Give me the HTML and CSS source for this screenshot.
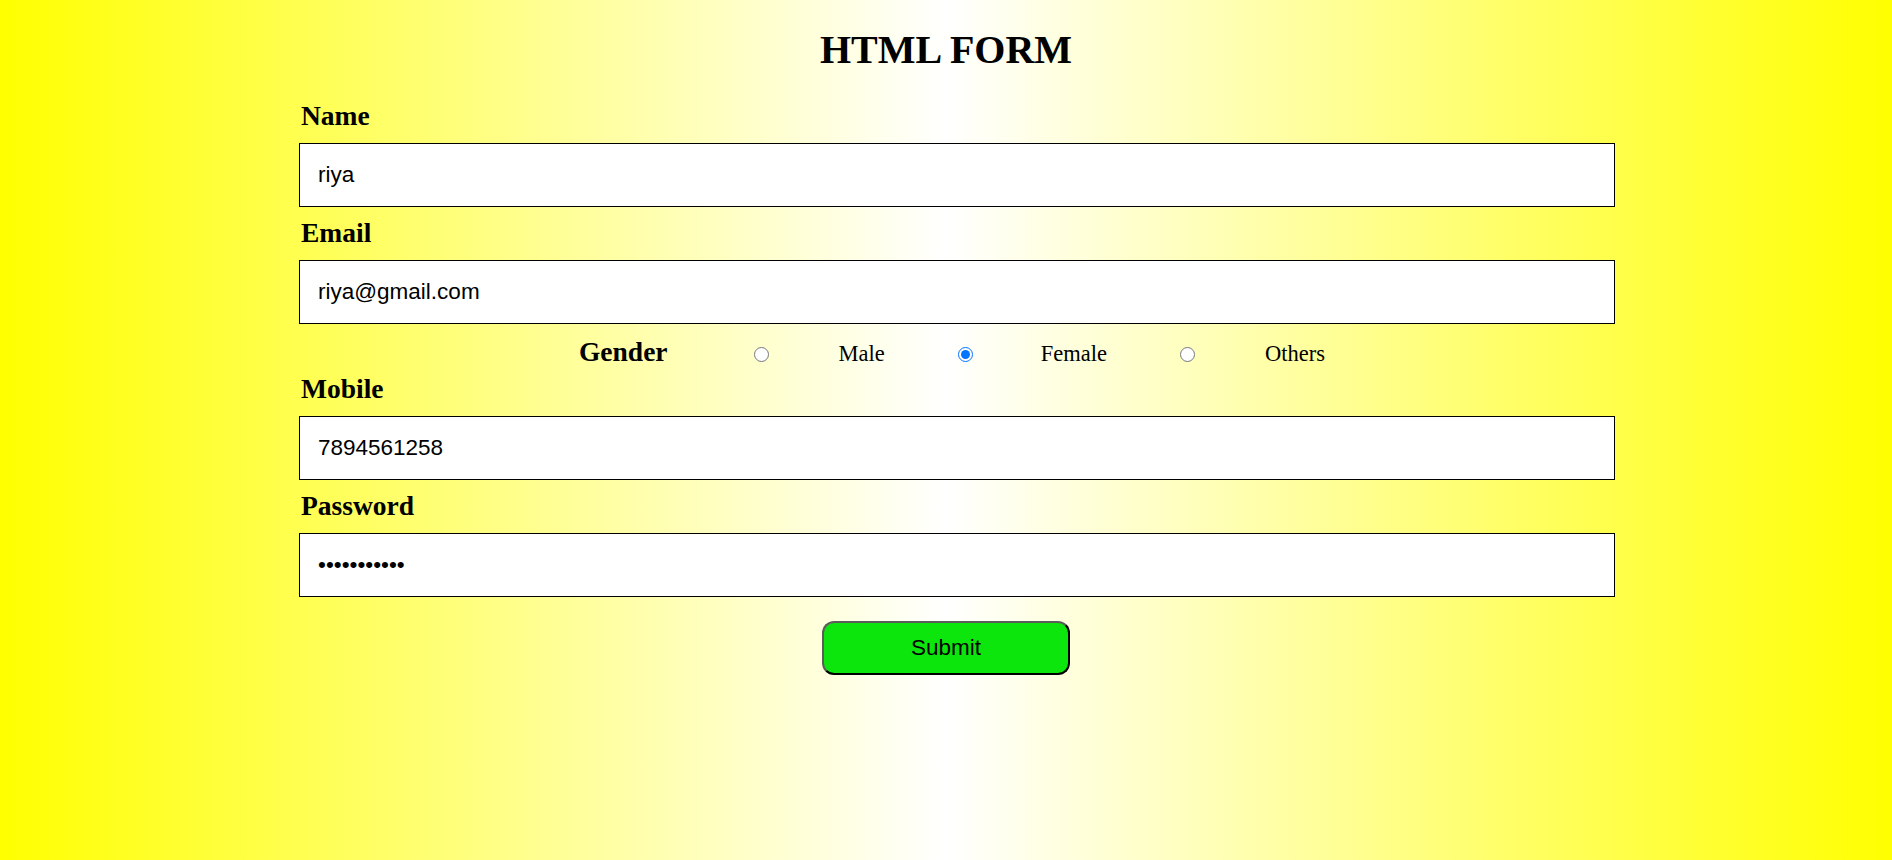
FILE: index.html
```html
<!DOCTYPE html>
<html lang="en">
<head>
<meta charset="utf-8">
<title>HTML FORM</title>
<link rel="stylesheet" href="styles.css">
</head>
<body>
  <h1 class="title">HTML FORM</h1>
  <form class="form">
    <div class="fields">
      <div class="field">
        <label class="field-label" for="name">Name</label>
        <input class="field-input" id="name" type="text" value="riya">
      </div>
      <div class="field field-last">
        <label class="field-label" for="email">Email</label>
        <input class="field-input" id="email" type="email" value="riya@gmail.com">
      </div>
    </div>
    <div class="gender-row">
      <span class="gender-title">Gender</span>
      <input class="radio radio-first" type="radio" name="gender" id="male">
      <label class="radio-label" for="male">Male</label>
      <input class="radio" type="radio" name="gender" id="female" checked>
      <label class="radio-label radio-label-tight" for="female">Female</label>
      <input class="radio" type="radio" name="gender" id="others">
      <label class="radio-label" for="others">Others</label>
    </div>
    <div class="fields">
      <div class="field">
        <label class="field-label" for="mobile">Mobile</label>
        <input class="field-input" id="mobile" type="tel" value="7894561258">
      </div>
      <div class="field field-last">
        <label class="field-label" for="password">Password</label>
        <input class="field-input" id="password" type="password" value="riya@123456">
      </div>
    </div>
    <div class="actions">
      <button class="submit" type="submit">Submit</button>
    </div>
  </form>
</body>
</html>
```

FILE: styles.css
```css
html, body {
  margin: 0;
  padding: 0;
}

body {
  min-height: 860px;
  background: linear-gradient(to right, #ffff00 0%, #ffffff 50%, #ffff00 100%);
  font-family: "Liberation Serif", "Times New Roman", serif;
  color: #000;
}

.title {
  margin: 28px 0 0;
  font-size: 40px;
  line-height: 44px;
  font-weight: bold;
  text-align: center;
}

.form {
  margin: 29px 0 0;
  display: flex;
  flex-direction: column;
}

.fields {
  width: 1316px;
  margin-left: 299px;
  display: flex;
  flex-direction: column;
}

.field {
  display: flex;
  flex-direction: column;
  margin-bottom: 11px;
}

.field-last {
  margin-bottom: 0;
}

.field-label {
  display: block;
  margin-left: 2px;
  font-size: 27.5px;
  line-height: 30px;
  font-weight: bold;
}

.field-input {
  box-sizing: border-box;
  width: 100%;
  height: 64px;
  margin: 12px 0 0;
  padding: 0 18px;
  border: 1px solid #000;
  border-radius: 0;
  background: #fff;
  font-family: "Liberation Sans", Arial, sans-serif;
  font-size: 22.5px;
  color: #000;
  outline: none;
}

.gender-row {
  display: flex;
  justify-content: center;
  align-items: baseline;
  padding-left: 12px;
  margin: 13px 0 5px;
  line-height: 30px;
}

.gender-title {
  font-size: 27.5px;
  font-weight: bold;
}

.radio {
  width: 15px;
  height: 15px;
  margin: 0 0 0 73px;
  align-self: center;
  position: relative;
  top: 1px;
}

.radio-first {
  margin-left: 86px;
}

.radio-label {
  margin-left: 70px;
  font-size: 22.5px;
}

.radio-label-tight {
  margin-left: 68px;
}

.actions {
  display: flex;
  justify-content: center;
  margin-top: 24px;
}

.submit {
  box-sizing: border-box;
  width: 248px;
  height: 54px;
  border: 2px solid;
  border-color: #5c5c5c #000 #000 #5c5c5c;
  border-radius: 12px;
  background: #0ce60c;
  font-family: "Liberation Sans", Arial, sans-serif;
  font-size: 22.5px;
  color: #000;
  cursor: pointer;
}
```
